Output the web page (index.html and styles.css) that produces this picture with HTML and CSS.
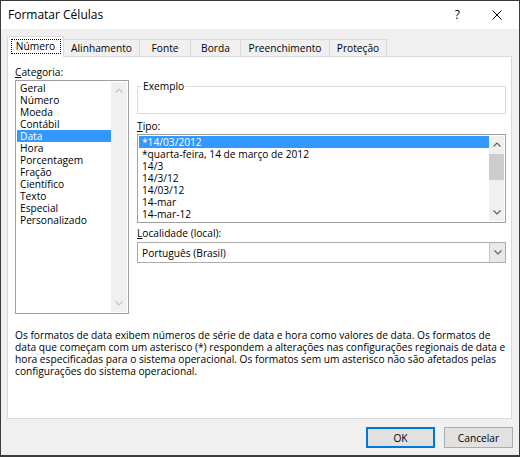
FILE: index.html
```html
<!DOCTYPE html>
<html lang="pt-BR">
<head>
<meta charset="utf-8">
<title>Formatar Células</title>
<link rel="stylesheet" href="styles.css">
</head>
<body>
<div class="window">
  <div class="titlebar">
    <span class="title">Formatar Células</span>
    <span class="help">?</span>
    <span class="close"><svg width="10" height="10" viewBox="0 0 10 10"><path d="M0.5 0.5 L9.5 9.5 M9.5 0.5 L0.5 9.5" stroke="#000" stroke-width="1" fill="none"/></svg></span>
  </div>
  <div class="client">
    <div class="tabs">
      <div class="tab active"><span class="focus">Número</span></div>
      <div class="tab t-alin">Alinhamento</div>
      <div class="tab t-fonte">Fonte</div>
      <div class="tab t-borda">Borda</div>
      <div class="tab t-pre">Preenchimento</div>
      <div class="tab t-prot">Proteção</div>
    </div>
    <div class="panel">
      <div class="cols">
        <div class="left">
          <div class="label"><u>C</u>ategoria:</div>
          <div class="listbox cat">
            <div class="items">
              <div class="item">Geral</div>
              <div class="item">Número</div>
              <div class="item">Moeda</div>
              <div class="item">Contábil</div>
              <div class="item sel">Data</div>
              <div class="item">Hora</div>
              <div class="item">Porcentagem</div>
              <div class="item">Fração</div>
              <div class="item">Científico</div>
              <div class="item">Texto</div>
              <div class="item">Especial</div>
              <div class="item">Personalizado</div>
            </div>
            <div class="vscroll disabled">
              <div class="arrow"><svg width="8" height="5" viewBox="0 0 8 5"><path d="M0.5 4.5 L4 1 L7.5 4.5" stroke="currentColor" stroke-width="1.2" fill="none"/></svg></div>
              <div class="track"></div>
              <div class="arrow"><svg width="8" height="5" viewBox="0 0 8 5"><path d="M0.5 0.5 L4 4 L7.5 0.5" stroke="currentColor" stroke-width="1.2" fill="none"/></svg></div>
            </div>
          </div>
        </div>
        <div class="right">
          <fieldset class="group"><legend>Exemplo</legend><div class="sample"></div></fieldset>
          <div class="label l-tipo"><u>T</u>ipo:</div>
          <div class="listbox tipo">
            <div class="items">
              <div class="item sel">*14/03/2012</div>
              <div class="item">*quarta-feira, 14 de março de 2012</div>
              <div class="item">14/3</div>
              <div class="item">14/3/12</div>
              <div class="item">14/03/12</div>
              <div class="item">14-mar</div>
              <div class="item">14-mar-12</div>
            </div>
            <div class="vscroll">
              <div class="arrow"><svg width="8" height="5" viewBox="0 0 8 5"><path d="M0.5 4.5 L4 1 L7.5 4.5" stroke="currentColor" stroke-width="1.2" fill="none"/></svg></div>
              <div class="track"><div class="thumb"></div></div>
              <div class="arrow"><svg width="8" height="5" viewBox="0 0 8 5"><path d="M0.5 0.5 L4 4 L7.5 0.5" stroke="currentColor" stroke-width="1.2" fill="none"/></svg></div>
            </div>
          </div>
          <div class="label l-loc"><u>L</u>ocalidade (local):</div>
          <div class="combo">
            <span class="combo-text">Português (Brasil)</span>
            <span class="dd"><svg width="8" height="5" viewBox="0 0 8 5"><path d="M0.5 0.5 L4 4 L7.5 0.5" stroke="#606060" stroke-width="1.1" fill="none"/></svg></span>
          </div>
        </div>
      </div>
      <p class="desc">Os formatos de data exibem números de série de data e hora como valores de data. Os formatos de<br>data que começam com um asterisco (*) respondem a alterações nas configurações regionais de data e<br>hora especificadas para o sistema operacional. Os formatos sem um asterisco não são afetados pelas<br>configurações do sistema operacional.</p>
    </div>
    <div class="buttons">
      <button class="btn default">OK</button>
      <button class="btn">Cancelar</button>
    </div>
  </div>
</div>
</body>
</html>
```

FILE: styles.css
```css
html, body {
  margin: 0;
  padding: 0;
}
body {
  font-family: "Open Sans", "Noto Sans", sans-serif;
  font-size: 10.2px;
  line-height: 12px;
  color: #000;
  background: #f0f0f0;
}
.window {
  width: 520px;
  height: 457px;
  box-sizing: border-box;
  border: 1px solid #3b3b3b;
  border-bottom-width: 2px;
  background: #f0f0f0;
  display: flex;
  flex-direction: column;
}
.titlebar {
  height: 28px;
  flex: none;
  background: #fff;
  display: flex;
  align-items: center;
  padding-left: 7px;
}
.title {
  font-size: 12px;
  line-height: 14px;
}
.help {
  margin-left: auto;
  font-size: 12px;
  line-height: 14px;
}
.close {
  display: flex;
  margin-left: 32px;
  margin-right: 17px;
}
.client {
  flex: 1;
  display: flex;
  flex-direction: column;
  padding: 7px 7px 0 6px;
}
.tabs {
  height: 20px;
  display: flex;
  align-items: flex-end;
  position: relative;
  z-index: 1;
}
.tab {
  height: 17px;
  box-sizing: border-box;
  border: 1px solid #d9d9d9;
  border-bottom: none;
  background: #f0f0f0;
  margin-left: -1px;
  display: flex;
  align-items: center;
  justify-content: center;
}
.tab.active {
  width: 57px;
  height: 21px;
  margin-left: 0;
  margin-bottom: -1px;
  background: #fff;
  position: relative;
  z-index: 2;
  padding-bottom: 1px;
}
.focus {
  display: block;
  width: 50px;
  height: 15px;
  box-sizing: border-box;
  border: 1px dotted #000;
  text-align: center;
  line-height: 13px;
}
.t-alin { width: 77px; margin-left: -1px; }
.t-fonte { width: 52px; }
.t-borda { width: 51px; }
.t-pre { width: 90px; }
.t-prot { width: 58px; }
.panel {
  height: 363px;
  box-sizing: border-box;
  border: 1px solid #d9d9d9;
  background: #fff;
  padding: 9px 5px 0 7px;
}
.cols {
  display: grid;
  grid-template-columns: 114px 369px;
  column-gap: 8px;
}
.label {
  height: 12px;
  line-height: 12px;
  margin-bottom: 2px;
}
.listbox {
  box-sizing: border-box;
  border: 1px solid #a0a0a0;
  padding: 1px;
  display: flex;
  background: #fff;
}
.listbox.cat {
  height: 234px;
}
.items {
  flex: 1;
  min-width: 0;
}
.item {
  height: 12px;
  line-height: 12px;
  padding-left: 3px;
  white-space: nowrap;
}
.item.sel {
  background: #3399ff;
  color: #fff;
}
.vscroll {
  width: 15px;
  background: #f0f0f0;
  display: flex;
  flex-direction: column;
  color: #606060;
}
.cat .vscroll {
  width: 16px;
}
.vscroll.disabled {
  color: #c2c2c2;
}
.arrow {
  height: 17px;
  display: flex;
  align-items: center;
  justify-content: center;
}
.track {
  flex: 1;
}
.thumb {
  margin-top: 1px;
  height: 26px;
  background: #cdcdcd;
}
.group {
  margin: 14px 0 0 0;
  padding: 0;
  border: 1px solid #dcdcdc;
  min-inline-size: 0;
}
.group legend {
  margin-left: 4px;
  padding: 0 1px;
  line-height: 12px;
}
.sample {
  height: 21px;
}
.l-tipo {
  margin-top: 6px;
}
.listbox.tipo {
  height: 89px;
}
.l-loc {
  margin-top: 4px;
  margin-bottom: 3px;
}
.combo {
  height: 21px;
  box-sizing: border-box;
  border: 1px solid #adadad;
  background: #fff;
  display: flex;
  align-items: stretch;
}
.combo-text {
  flex: 1;
  padding-left: 4px;
  display: flex;
  align-items: center;
}
.dd {
  width: 16px;
  box-sizing: border-box;
  border-left: 1px solid #c4c4c4;
  background: #e9e9e9;
  display: flex;
  align-items: center;
  justify-content: center;
}
.desc {
  margin: 15px 0 0 0;
  white-space: nowrap;
}
.buttons {
  display: flex;
  justify-content: flex-end;
  gap: 9px;
  margin-top: 8px;
  margin-right: -1px;
}
.btn {
  width: 69px;
  height: 21px;
  box-sizing: border-box;
  border: 1px solid #adadad;
  background: #e1e1e1;
  font-family: inherit;
  font-size: 10.2px;
  line-height: 12px;
  color: #000;
  padding: 0;
  margin: 0;
}
.btn.default {
  border-color: #0078d7;
  box-shadow: inset 0 0 0 1px #0078d7;
}
```
